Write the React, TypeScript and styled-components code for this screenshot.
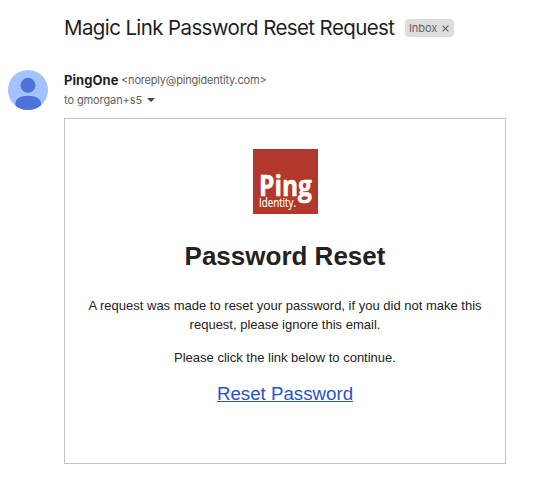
import React from "react";
import styled, { createGlobalStyle } from "styled-components";

const GlobalStyle = createGlobalStyle`
  body { margin: 0; background: #fff; }
  *, *::before, *::after { box-sizing: border-box; }
`;

const Page = styled.main`
  width: 553px;
  height: 495px;
  overflow: hidden;
  color: #222;
  font-family: Inter, "Liberation Sans", sans-serif;
`;

const SubjectBar = styled.header`
  display: flex;
  align-items: center;
  height: 56px;
  padding-left: 64px;
`;

const Subject = styled.h1`
  width: 341px;
  margin: 0;
  font-size: 20.5px;
  font-weight: 400;
  line-height: 28px;
  letter-spacing: -0.61px;
  white-space: nowrap;
  color: #1f1f1f;
`;

const Label = styled.span`
  display: flex;
  align-items: center;
  gap: 5px;
  width: 49px;
  height: 18px;
  padding-left: 4px;
  border-radius: 4px;
  background: #ddd;
  color: #666;
  font-size: 11px;
  line-height: 18px;
  letter-spacing: -0.1px;
`;

const Message = styled.article`
  display: grid;
  grid-template-columns: 56px 442px;
  padding: 14px 0 0 8px;
`;

const Avatar = styled.svg`
  display: block;
  width: 40px;
  height: 40px;
`;

const Sender = styled.div`
  display: flex;
  align-items: center;
  height: 20px;
  white-space: nowrap;
`;

const SenderName = styled.span`
  width: 57px;
  font-size: 13px;
  font-weight: 700;
  letter-spacing: 0.05px;
  color: #1f1f1f;
`;

const Address = styled.span`
  font-size: 11px;
  letter-spacing: -0.2px;
  color: #5e5e5e;
`;

const Recipient = styled.div`
  display: flex;
  align-items: center;
  gap: 5px;
  height: 20px;
  font-size: 11px;
  letter-spacing: -0.1px;
  color: #5e5e5e;
`;

const Card = styled.section`
  display: flex;
  flex-direction: column;
  align-items: center;
  height: 346px;
  margin-top: 8px;
  padding-top: 30px;
  border: 1px solid #c2c2c2;
  font-family: "Liberation Sans", Arial, sans-serif;
  text-align: center;
`;

const Logo = styled.svg`
  display: block;
  width: 65px;
  height: 65px;
  overflow: visible;
`;

const Heading = styled.h2`
  margin: 26px 0 0;
  font-size: 26px;
  font-weight: 700;
  line-height: 32px;
`;

const Copy = styled.p<{ $top: number }>`
  margin: ${(p) => p.$top}px 0 0;
  font-size: 13px;
  line-height: 19px;
  white-space: nowrap;
`;

const ResetLink = styled.a`
  margin-top: 15px;
  font-size: 18.7px;
  line-height: 24px;
  color: #2754cc;
  text-decoration: underline;
  text-decoration-thickness: 1px;
  text-underline-offset: 1px;
`;

export default function App() {
  return (
    <>
      <GlobalStyle />
      <Page>
        <SubjectBar>
          <Subject>Magic Link Password Reset Request</Subject>
          <Label>
            <span>Inbox</span>
            <svg width="7" height="7" viewBox="0 0 7 7">
              <path d="M.6.6l5.8 5.8m0-5.8L.6 6.4" stroke="#666" strokeWidth="1.2" />
            </svg>
          </Label>
        </SubjectBar>
        <Message>
          <Avatar viewBox="0 0 40 40">
            <defs>
              <clipPath id="avatar">
                <circle cx="20" cy="20" r="20" />
              </clipPath>
            </defs>
            <g clipPath="url(#avatar)">
              <rect width="40" height="40" fill="#a4c2fc" />
              <circle cx="20" cy="15.3" r="7.5" fill="#4d73db" />
              <path d="M7.5 42V33C7.5 28.5 13 25.7 20 25.7S33 28.5 33 33V42Z" fill="#4d73db" />
            </g>
          </Avatar>
          <div>
            <Sender>
              <SenderName>PingOne</SenderName>
              <Address>&lt;noreply@pingidentity.com&gt;</Address>
            </Sender>
            <Recipient>
              <span>to gmorgan+s5</span>
              <svg width="8" height="4" viewBox="0 0 8 4">
                <path d="M0 0h8L4 4z" fill="#444" />
              </svg>
            </Recipient>
            <Card>
              <Logo viewBox="0 0 65 65">
                <rect width="65" height="65" fill="#b1382a" />
                <g fill="#fff" fontFamily="Open Sans, sans-serif">
                  <text x="6" y="46.5" fontSize="28" fontWeight="700" stroke="#fff" strokeWidth="0.5" textLength="53" lengthAdjust="spacingAndGlyphs">Ping</text>
                  <text x="6" y="58" fontSize="12.5" textLength="37" lengthAdjust="spacingAndGlyphs" stroke="#fff" strokeWidth="0.15">Identity.</text>
                </g>
              </Logo>
              <Heading>Password Reset</Heading>
              <Copy $top={24}>
                A request was made to reset your password, if you did not make this
                <br />
                request, please ignore this email.
              </Copy>
              <Copy $top={14}>Please click the link below to continue.</Copy>
              <ResetLink href="#">Reset Password</ResetLink>
            </Card>
          </div>
        </Message>
      </Page>
    </>
  );
}
